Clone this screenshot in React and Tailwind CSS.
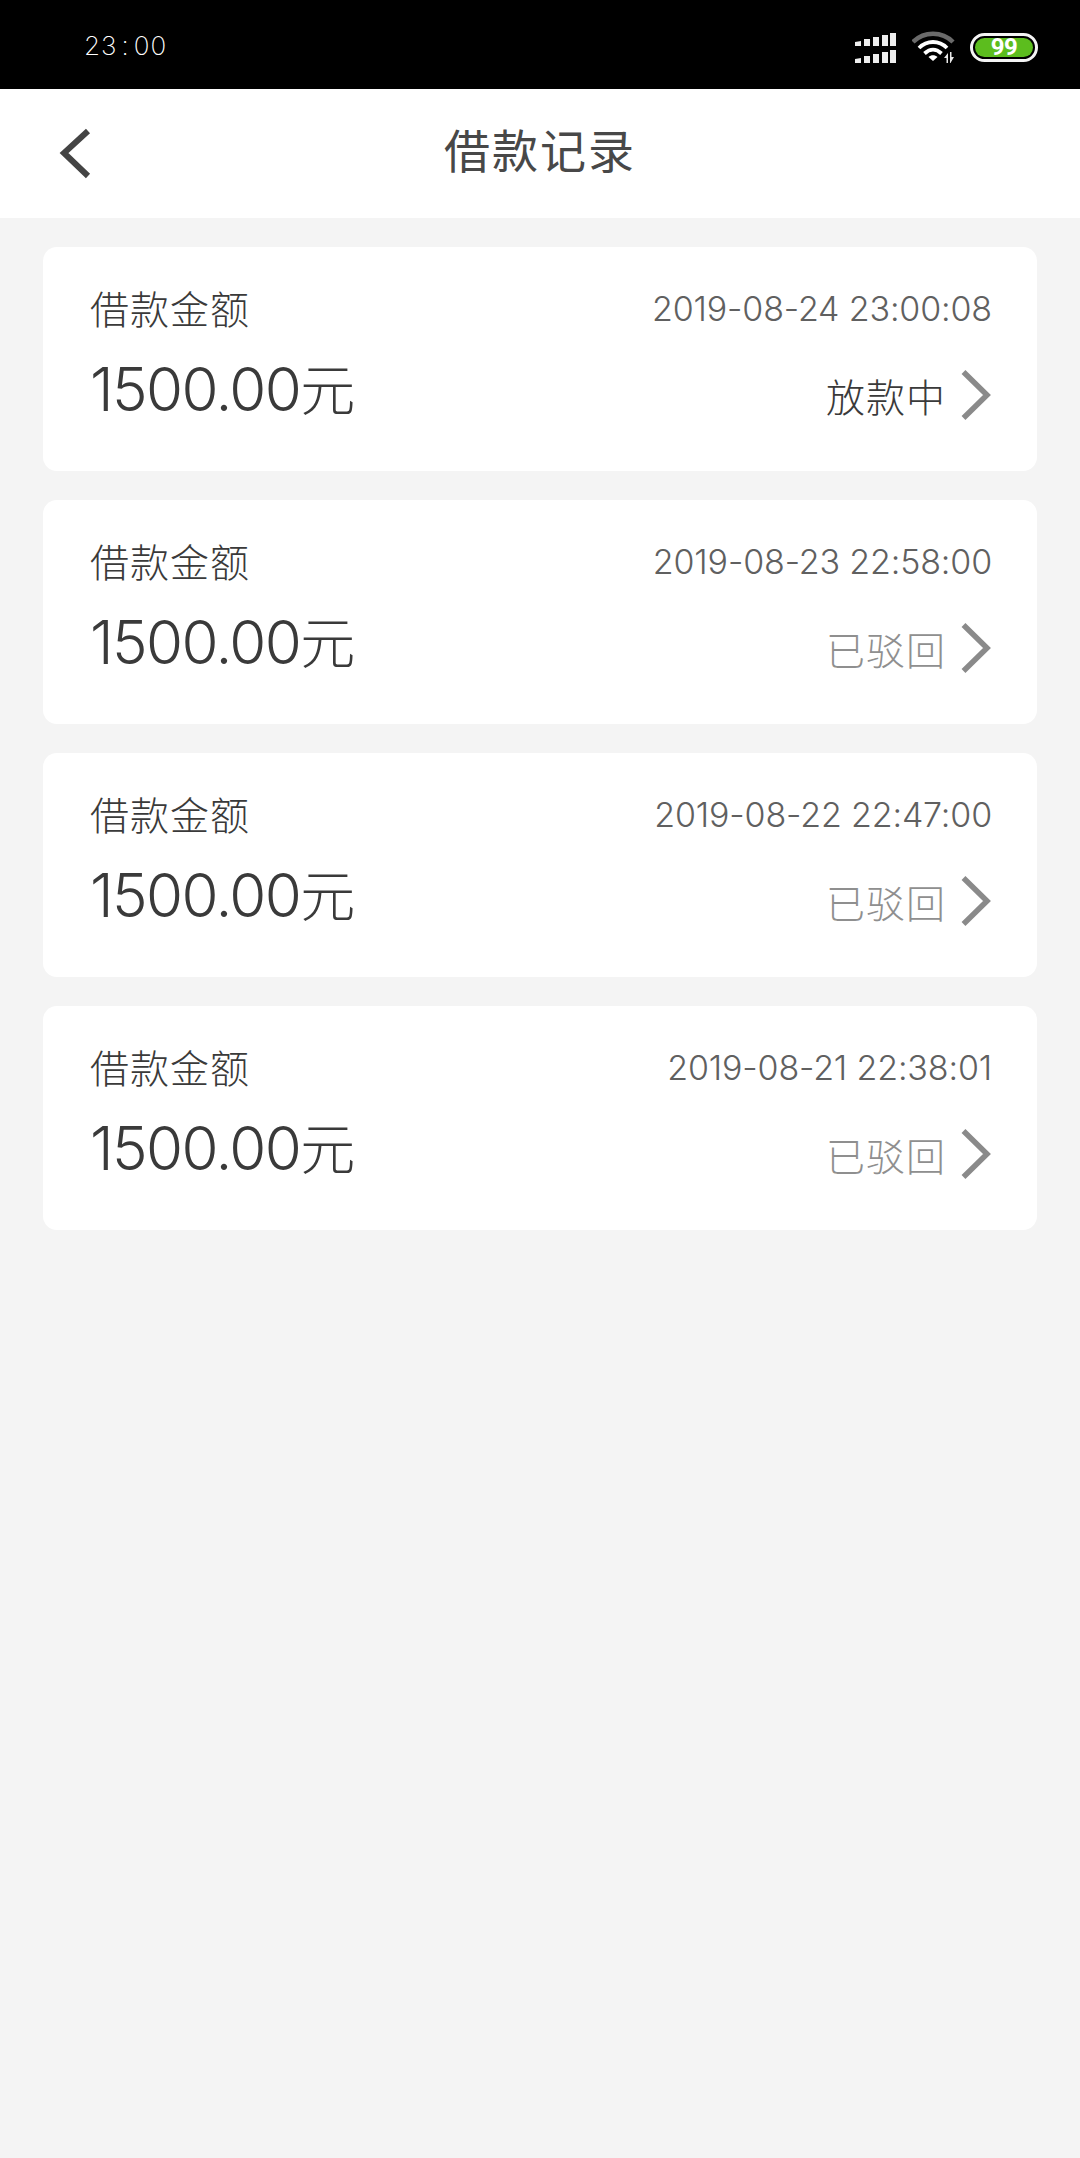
const cjk = "font-['Noto_Sans_CJK_SC',sans-serif]";

function Signal() {
  const xs = [0, 9, 18, 27, 35];
  const hs = [5, 7, 9, 11, 13];
  return (
    <svg width="41" height="31" viewBox="0 0 41 31" className="block">
      {[14, 31].map((b) =>
        xs.map((x, i) => (
          <path key={`${b}-${i}`} d={`M${x} ${b - hs[i] + (i === 0 ? 1 : 0)} L${x + 6} ${b - hs[i]} L${x + 6} ${b} L${x} ${b} Z`} fill="#eeeeee" />
        ))
      )}
    </svg>
  );
}

function Wifi() {
  return (
    <svg width="48" height="34" viewBox="0 0 48 34" className="block">
      <path d="M1 12 C12 1 30 1 41 12" fill="none" stroke="#6a6a6a" strokeWidth="4.5" />
      <path d="M7 18 C15 10 27 10 35 18" fill="none" stroke="#ffffff" strokeWidth="3.8" />
      <path d="M12.5 23.5 C18 18.5 24 18.5 29.5 23.5" fill="none" stroke="#ffffff" strokeWidth="3.8" />
      <path d="M16.5 27 C19 24.5 23 24.5 25.5 27 L21 31 Z" fill="#ffffff" />
      <path d="M32 28 L36 23 L36 33 L34.5 33 L34.5 28 Z" fill="#e8e8e8" />
      <path d="M38 22 L39.5 22 L39.5 27 L42 27 L38.5 33 L38 33 Z" fill="#e8e8e8" />
    </svg>
  );
}

function Battery() {
  return (
    <div className="flex h-[29px] w-[68px] items-center justify-center rounded-full border-[3px] border-[#f4f4f4] p-[2px]">
      <div className="flex h-full w-full items-center justify-center rounded-full bg-[#5cbd1e]">
        <span className="font-['Roboto',sans-serif] text-[24px] leading-none font-bold tracking-[-0.5px] text-white">99</span>
      </div>
    </div>
  );
}

function Chevron({ color, className }) {
  return (
    <svg width="32" height="52" viewBox="0 0 32 52" className={className}>
      <path d="M3.5 3 L27 26 L3.5 49" fill="none" stroke={color} strokeWidth="5.5" />
    </svg>
  );
}

function Card({ date, status, active }) {
  return (
    <div className="flex h-[224px] flex-col rounded-[14px] bg-white pl-[47px] pr-[45px] pt-[35px]">
      <div className="flex h-[54px] items-center justify-between">
        <span className={`${cjk} pb-[3px] text-[39px] leading-none font-light tracking-[1px] text-[#3a3a3a]`}>借款金额</span>
        <span className="font-['Inter',sans-serif] text-[34px] leading-none font-light tracking-[-0.15px] text-[#606060]">{date}</span>
      </div>
      <div className="mt-[5px] flex items-start justify-between">
        <span className="mt-[12px] flex h-[72px] items-center font-['Inter',sans-serif] text-[60px] leading-none font-light tracking-[-1.6px] text-[#3a3a3a]">
          1500.00<span className={`${cjk} -translate-y-[3px] text-[55px] font-light tracking-normal`}>元</span>
        </span>
        <span className="mt-[28px] flex items-center">
          <span className={`${cjk} text-[39px] leading-none font-light tracking-[1px] ${active ? "text-[#3a3a3a]" : "text-[#8f8f8f]"}`}>{status}</span>
          <Chevron color="#8a8a8a" className="ml-[14px]" />
        </span>
      </div>
    </div>
  );
}

export default function App() {
  const rows = [
    { date: "2019-08-24 23:00:08", status: "放款中", active: true },
    { date: "2019-08-23 22:58:00", status: "已驳回" },
    { date: "2019-08-22 22:47:00", status: "已驳回" },
    { date: "2019-08-21 22:38:01", status: "已驳回" },
  ];
  return (
    <div className="flex h-[2158px] w-[1080px] flex-col bg-[#f4f4f4]">
      <div className="flex h-[89px] items-center justify-between bg-black pl-[84px] pr-[42px]">
        <span className="pt-[2px] font-['Inter',sans-serif] text-[26px] leading-none font-extralight tracking-[1px] text-white">
          23<span className="mx-[4px]">:</span>00
        </span>
        <div className="flex items-center pt-[5px]">
          <Signal />
          <div className="ml-[16px]"><Wifi /></div>
          <div className="ml-[10px]"><Battery /></div>
        </div>
      </div>
      <div className="relative flex h-[129px] items-center justify-center bg-white">
        <svg width="36" height="56" viewBox="0 0 36 56" className="absolute left-[57px] top-[38px]">
          <path d="M31 4 L7 26 L31 49" fill="none" stroke="#444444" strokeWidth="6" />
        </svg>
        <span className={`${cjk} pb-[12px] text-[46px] leading-none tracking-[2px] text-[#484848]`}>借款记录</span>
      </div>
      <div className="flex flex-col gap-[29px] px-[43px] pt-[29px]">
        {rows.map((r) => (
          <Card key={r.date} {...r} />
        ))}
      </div>
    </div>
  );
}
